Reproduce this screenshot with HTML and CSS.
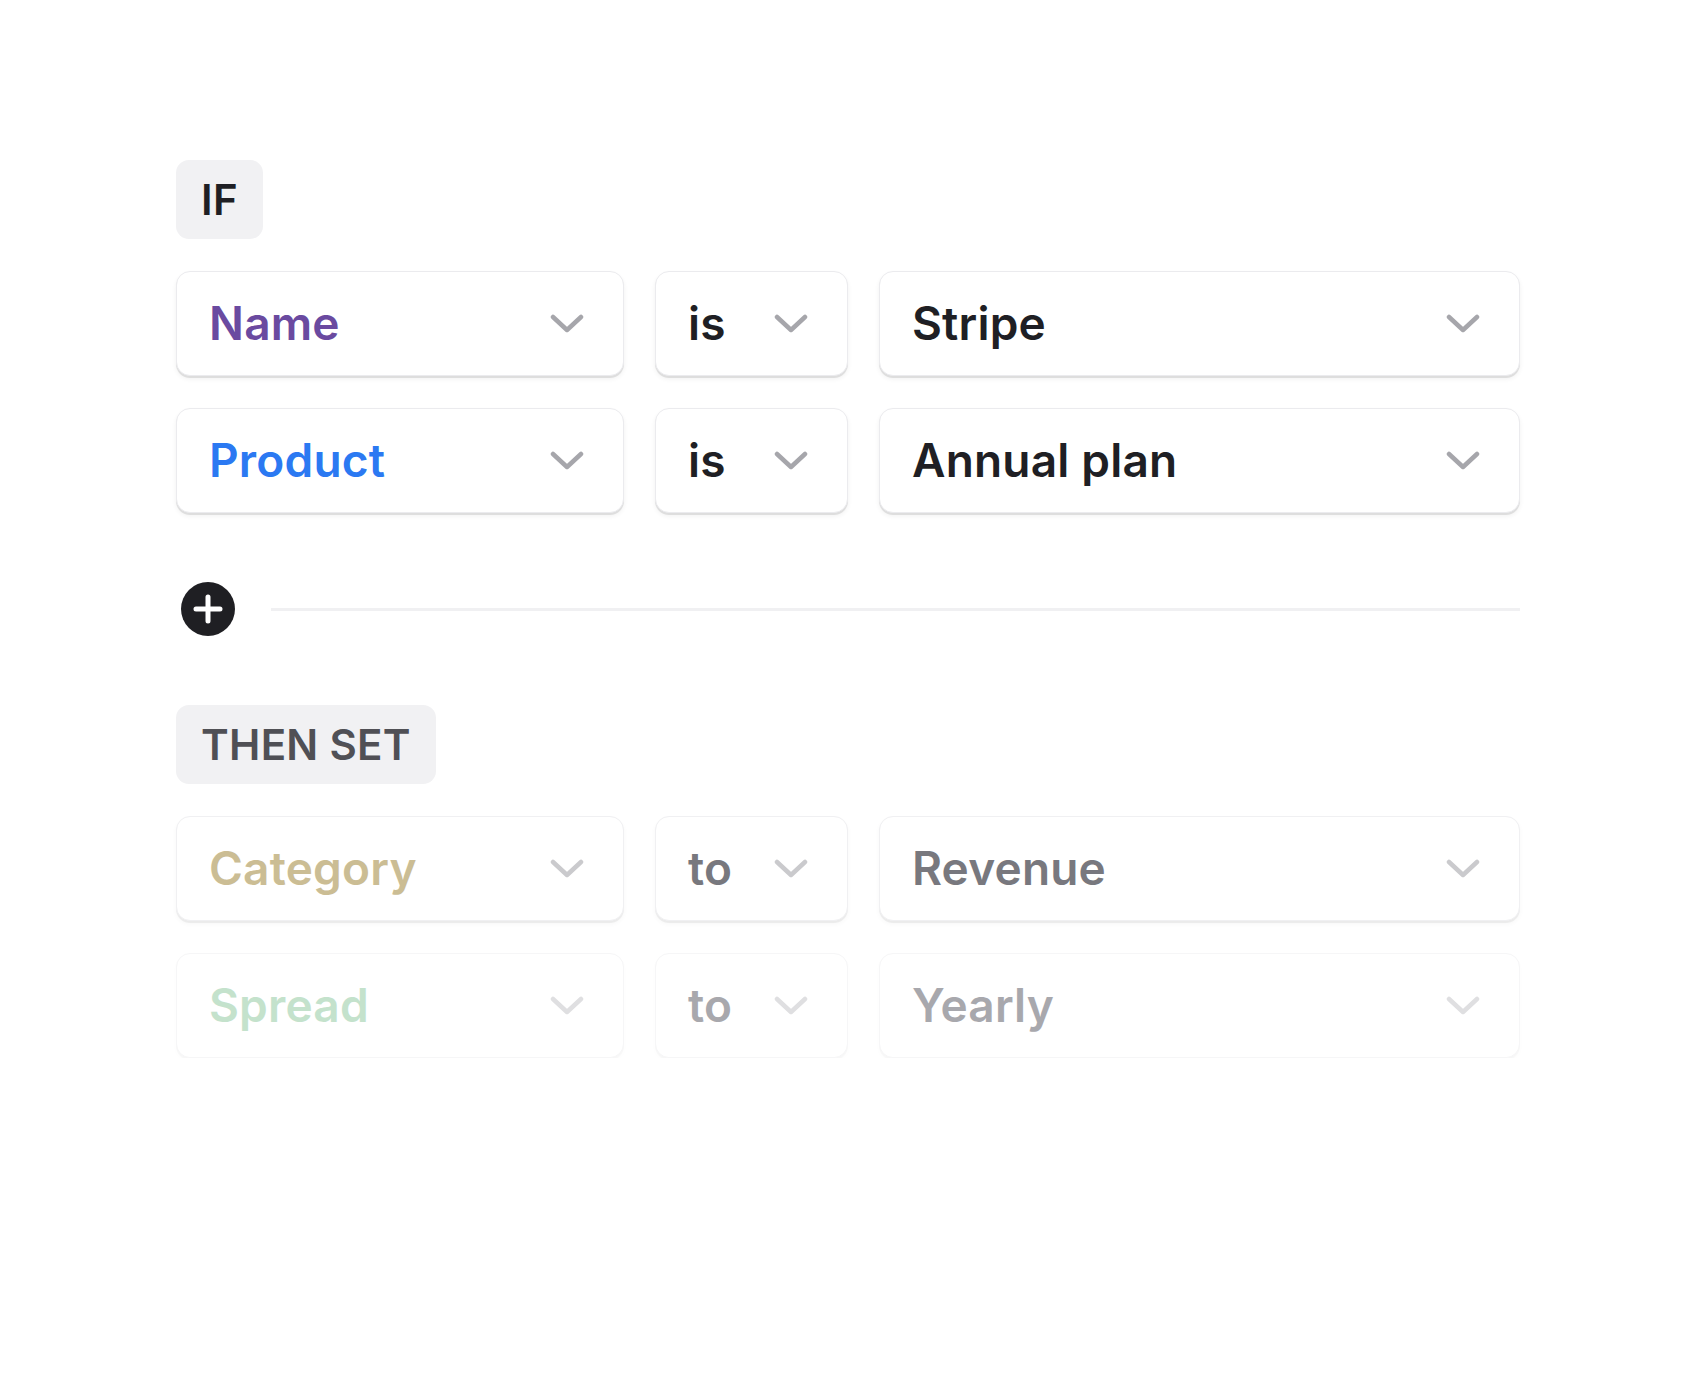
FILE: index.html
```html
<!DOCTYPE html>
<html lang="en">
<head>
<meta charset="utf-8">
<title>Rule builder</title>
<link rel="stylesheet" href="styles.css">
</head>
<body>
<main class="rule">
  <div class="badge badge-if">IF</div>
  <div class="rows">
    <div class="row">
      <div class="field col-a"><span class="val purple">Name</span><svg class="chev" viewBox="0 0 34 20"><path d="M3 3 L17 16 L31 3"/></svg></div>
      <div class="field col-b"><span class="val dark">is</span><svg class="chev" viewBox="0 0 34 20"><path d="M3 3 L17 16 L31 3"/></svg></div>
      <div class="field col-c"><span class="val dark">Stripe</span><svg class="chev" viewBox="0 0 34 20"><path d="M3 3 L17 16 L31 3"/></svg></div>
    </div>
    <div class="row">
      <div class="field col-a"><span class="val blue">Product</span><svg class="chev" viewBox="0 0 34 20"><path d="M3 3 L17 16 L31 3"/></svg></div>
      <div class="field col-b"><span class="val dark">is</span><svg class="chev" viewBox="0 0 34 20"><path d="M3 3 L17 16 L31 3"/></svg></div>
      <div class="field col-c"><span class="val dark">Annual plan</span><svg class="chev" viewBox="0 0 34 20"><path d="M3 3 L17 16 L31 3"/></svg></div>
    </div>
  </div>

  <div class="adder">
    <svg class="plus" viewBox="0 0 54 54"><circle cx="27" cy="27" r="27"/><path d="M27 15 V39 M15 27 H39"/></svg>
    <div class="divider"></div>
  </div>

  <div class="badge badge-then">THEN SET</div>
  <div class="rows">
    <div class="row fade1">
      <div class="field col-a"><span class="val tan">Category</span><svg class="chev" viewBox="0 0 34 20"><path d="M3 3 L17 16 L31 3"/></svg></div>
      <div class="field col-b"><span class="val grey">to</span><svg class="chev" viewBox="0 0 34 20"><path d="M3 3 L17 16 L31 3"/></svg></div>
      <div class="field col-c"><span class="val grey">Revenue</span><svg class="chev" viewBox="0 0 34 20"><path d="M3 3 L17 16 L31 3"/></svg></div>
    </div>
    <div class="row fade2">
      <div class="field col-a"><span class="val green">Spread</span><svg class="chev" viewBox="0 0 34 20"><path d="M3 3 L17 16 L31 3"/></svg></div>
      <div class="field col-b"><span class="val grey">to</span><svg class="chev" viewBox="0 0 34 20"><path d="M3 3 L17 16 L31 3"/></svg></div>
      <div class="field col-c"><span class="val grey">Yearly</span><svg class="chev" viewBox="0 0 34 20"><path d="M3 3 L17 16 L31 3"/></svg></div>
    </div>
  </div>
</main>
</body>
</html>
```

FILE: styles.css
```css
html, body {
  margin: 0;
  padding: 0;
  background: #ffffff;
}

body {
  font-family: Inter, "Noto Sans", "Liberation Sans", sans-serif;
  color: #1f1f24;
}

.rule {
  width: 1344px;
  padding: 160px 0 0 176px;
  display: flex;
  flex-direction: column;
}

.badge {
  align-self: flex-start;
  height: 79px;
  box-sizing: border-box;
  padding: 0 25px;
  display: flex;
  align-items: center;
  background: #f1f1f3;
  border-radius: 13px;
  font-size: 42px;
  font-weight: 600;
  letter-spacing: 0.3px;
}

.badge-if {
  color: #1f1f24;
}

.badge-then {
  color: #505055;
}

.rows {
  margin-top: 32px;
  display: flex;
  flex-direction: column;
  gap: 32px;
}

.row {
  display: grid;
  grid-template-columns: 448px 193px 641px;
  column-gap: 31px;
}

.field {
  height: 105px;
  box-sizing: border-box;
  border: 1px solid #ebebee;
  border-radius: 14px;
  background: #ffffff;
  box-shadow: 0 2px 0 rgba(0, 0, 0, 0.09), 0 3px 5px rgba(0, 0, 0, 0.06);
  display: flex;
  align-items: center;
  justify-content: space-between;
  padding: 0 39px 0 32px;
}

.val {
  font-size: 46px;
  font-weight: 560;
  line-height: 1;
  letter-spacing: 0.2px;
  padding-bottom: 2px;
}

.purple { color: #6a4aa0; }
.blue { color: #2b79f2; }
.dark { color: #1f1f24; }
.tan { color: #cbbd94; }
.green { color: #c4e2cc; }

.chev {
  width: 34px;
  height: 20px;
  fill: none;
  stroke: #a6a6ab;
  stroke-width: 4.5;
  stroke-linecap: round;
  stroke-linejoin: round;
}

.adder {
  margin-top: 69px;
  margin-left: 5px;
  display: flex;
  align-items: center;
  gap: 36px;
}

.plus {
  width: 54px;
  height: 54px;
  flex: none;
}

.plus circle {
  fill: #1f1f23;
}

.plus path {
  stroke: #ffffff;
  stroke-width: 5;
  stroke-linecap: round;
}

.divider {
  flex: 1;
  height: 3px;
  background: #f0f0f2;
}

.badge-then {
  margin-top: 69px;
}

.fade1 .field {
  border-color: #f0f0f2;
  box-shadow: 0 2px 0 rgba(0, 0, 0, 0.05), 0 3px 5px rgba(0, 0, 0, 0.035);
}

.fade1 .grey { color: #78787e; }
.fade1 .chev { stroke: #cacacd; }

.fade2 .field {
  border-color: #f6f6f7;
  box-shadow: 0 2px 0 rgba(0, 0, 0, 0.02), 0 3px 5px rgba(0, 0, 0, 0.015);
}

.fade2 .grey { color: #a8a8ad; }
.fade2 .chev { stroke: #dfdfe1; }
```
